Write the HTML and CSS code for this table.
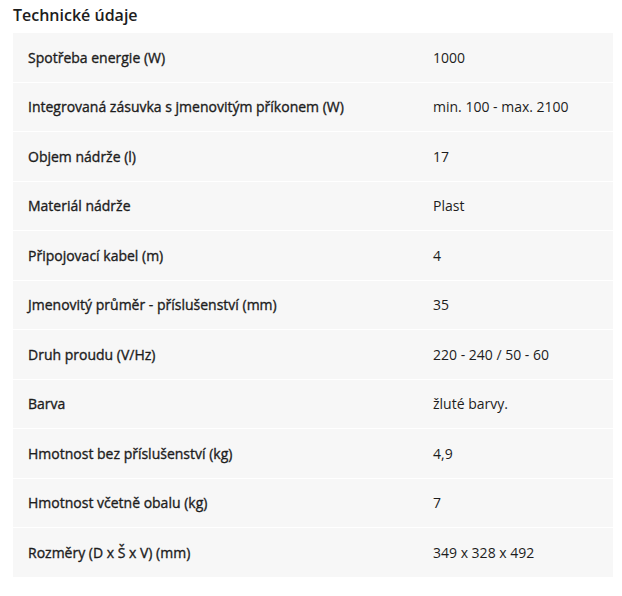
FILE: index.html
```html
<!DOCTYPE html>
<html lang="cs">
<head>
<meta charset="utf-8">
<title>Technické údaje</title>
<link rel="stylesheet" href="styles.css">
</head>
<body>
<section class="specs">
  <h2 class="specs-title">Technické údaje</h2>
  <div class="specs-table">
    <div class="row"><div class="label">Spotřeba energie (W)</div><div class="value">1000</div></div>
    <div class="row"><div class="label">Integrovaná zásuvka s jmenovitým příkonem (W)</div><div class="value">min. 100 - max. 2100</div></div>
    <div class="row"><div class="label">Objem nádrže (l)</div><div class="value">17</div></div>
    <div class="row"><div class="label">Materiál nádrže</div><div class="value">Plast</div></div>
    <div class="row"><div class="label">Připojovací kabel (m)</div><div class="value">4</div></div>
    <div class="row"><div class="label">Jmenovitý průměr - příslušenství (mm)</div><div class="value">35</div></div>
    <div class="row"><div class="label">Druh proudu (V/Hz)</div><div class="value">220 - 240 / 50 - 60</div></div>
    <div class="row"><div class="label">Barva</div><div class="value">žluté barvy.</div></div>
    <div class="row"><div class="label">Hmotnost bez příslušenství (kg)</div><div class="value">4,9</div></div>
    <div class="row"><div class="label">Hmotnost včetně obalu (kg)</div><div class="value">7</div></div>
    <div class="row"><div class="label">Rozměry (D x Š x V) (mm)</div><div class="value">349 x 328 x 492</div></div>
  </div>
</section>
</body>
</html>
```
FILE: styles.css
```css
html, body {
  margin: 0;
  padding: 0;
  background: #ffffff;
}
body {
  font-family: "Open Sans", "Liberation Sans", sans-serif;
  color: #1d1d1d;
}
.specs {
  width: 600px;
  margin-left: 13px;
}
.specs-title {
  margin: 0;
  padding-top: 3px;
  font-size: 16px;
  line-height: 24px;
  font-weight: 600;
  height: 30px;
}
.specs-table {
  display: flex;
  flex-direction: column;
  background: #f7f7f7;
}
.row {
  display: grid;
  grid-template-columns: 405px 1fr;
  align-items: center;
  height: 48.5px;
  padding-left: 15px;
  border-bottom: 1px solid #ffffff;
  font-size: 14px;
}
.row:last-child {
  border-bottom: none;
}
.label {
  font-weight: 400;
  -webkit-text-stroke: 0.35px currentColor;
}
.value {
  font-weight: 400;
}
```
